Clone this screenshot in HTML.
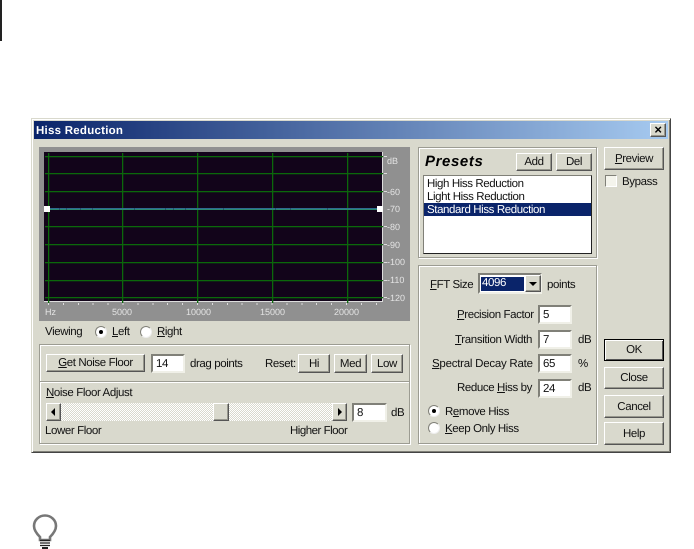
<!DOCTYPE html>
<html><head><meta charset="utf-8"><style>
html,body{margin:0;padding:0;background:#fff}
#r{position:relative;width:694px;height:549px;overflow:hidden;background:#fff;font:11.5px/13px "Liberation Sans",sans-serif;letter-spacing:-.4px;color:#111;text-rendering:geometricPrecision;filter:blur(.3px)}
#r div,#r span.t{position:absolute;box-sizing:border-box}
.t{white-space:nowrap;margin-top:1px}
.btn{background:#d9d9cd;border:1px solid;border-color:#fff #555 #555 #fff;box-shadow:inset -1px -1px 0 #98988e;text-align:center;padding-top:1px}
.in{background:#fff;border:2px solid;border-color:#808078 #f0f0e8 #f0f0e8 #808078;padding-left:3px;padding-top:1px}
.grp{border:1px solid #9c9c92;box-shadow:inset 1px 1px 0 #fff,1px 1px 0 #fff}
.h{background:#0b680b;height:1px;left:45px;width:338px;box-shadow:0 1px 0 rgba(10,100,10,.3)}
.v{background:#0b680b;width:1px;top:153px;height:150px;box-shadow:1px 0 0 rgba(10,100,10,.3)}
.k{background:#ddd;left:384px;width:3px;height:1px}
.n{background:#24506f;left:0;top:208px;width:1px;height:2px}
#r span.lab{color:#e4e4e4;font-size:9px;line-height:12px;letter-spacing:0}
.rad{width:12px;height:12px;border-radius:50%;background:#fff;border:1px solid;border-color:#808078 #eee #eee #808078}
.dot{width:4px;height:4px;border-radius:50%;background:#000;left:3px;top:3px}
</style></head><body><div id="r">
<div style="left:0;top:0;width:2px;height:41px;background:#222"></div>

<div style="left:31px;top:118px;width:640px;height:335px;background:#d9d9cd;border:1px solid;border-color:#d9d9cd #444 #444 #d9d9cd;box-shadow:inset 1px 1px 0 #fff,inset -1px -1px 0 #808078"></div>
<div style="left:34px;top:121px;width:634px;height:18px;background:linear-gradient(90deg,#0a246a,#a6caf0)"></div>
<span class="t" style="left:36px;top:123px;color:#fff;font-weight:bold;line-height:14px;letter-spacing:.25px">Hiss Reduction</span>
<div class="btn" style="left:650px;top:123px;width:16px;height:14px;font:bold 13px/12px 'Liberation Sans',sans-serif;color:#000;padding:0">×</div>

<!-- graph -->
<div style="left:39px;top:147px;width:371px;height:174px;background:#909090"></div>
<div style="left:44px;top:152px;width:339px;height:150px;background:#12041a;border-right:1px solid #ddd;border-bottom:1px solid #ddd"></div>
<div class="h" style="top:156px"></div><div class="h" style="top:173px"></div><div class="h" style="top:191px"></div>
<div class="h" style="top:226px"></div><div class="h" style="top:244px"></div><div class="h" style="top:262px"></div>
<div class="h" style="top:280px"></div><div class="h" style="top:297px"></div>
<div class="v" style="left:48px"></div><div class="v" style="left:122px"></div><div class="v" style="left:197px"></div><div class="v" style="left:272px"></div><div class="v" style="left:347px"></div>
<div style="left:48px;top:209px;width:332px;height:1px;background:#2a8a70"></div>
<div style="left:48px;top:208px;width:332px;height:1px;background:#2f6a90"></div>
<div class="n" style="left:59px"></div><div class="n" style="left:66px"></div><div class="n" style="left:80px"></div><div class="n" style="left:92px"></div><div class="n" style="left:134px"></div><div class="n" style="left:165px"></div><div class="n" style="left:173px"></div><div class="n" style="left:185px"></div><div class="n" style="left:223px"></div><div class="n" style="left:275px"></div><div class="n" style="left:290px"></div><div class="n" style="left:327px"></div>
<div style="left:44px;top:206px;width:6px;height:6px;background:#fff"></div>
<div style="left:377px;top:206px;width:6px;height:6px;background:#fff"></div>
<div class="k" style="top:156px"></div><div class="k" style="top:173px"></div><div class="k" style="top:191px"></div><div class="k" style="top:226px"></div><div class="k" style="top:244px"></div><div class="k" style="top:262px"></div><div class="k" style="top:280px"></div><div class="k" style="top:297px"></div>
<div style="left:48px;top:303px;width:335px;height:2px;background:repeating-linear-gradient(90deg,#ddd 0 1px,transparent 1px 14.900px)"></div>
<span class="t lab" style="left:387px;top:154px">dB</span>
<span class="t lab" style="left:387px;top:185px">-60</span>
<span class="t lab" style="left:387px;top:202px">-70</span>
<span class="t lab" style="left:387px;top:220px">-80</span>
<span class="t lab" style="left:387px;top:238px">-90</span>
<span class="t lab" style="left:387px;top:255px">-100</span>
<span class="t lab" style="left:387px;top:273px">-110</span>
<span class="t lab" style="left:387px;top:291px">-120</span>
<span class="t lab" style="left:45px;top:305px">Hz</span>
<span class="t lab" style="left:112px;top:305px">5000</span>
<span class="t lab" style="left:186px;top:305px">10000</span>
<span class="t lab" style="left:260px;top:305px">15000</span>
<span class="t lab" style="left:334px;top:305px">20000</span>

<!-- viewing -->
<span class="t" style="left:45px;top:325px">Viewing</span>
<div class="rad" style="left:95px;top:326px"><div class="dot"></div></div>
<span class="t" style="left:112px;top:325px"><u>L</u>eft</span>
<div class="rad" style="left:140px;top:326px"></div>
<span class="t" style="left:157px;top:325px"><u>R</u>ight</span>

<!-- left groups -->
<div class="grp" style="left:39px;top:344px;width:371px;height:38px"></div>
<div class="grp" style="left:39px;top:381px;width:371px;height:63px"></div>
<div class="btn" style="left:46px;top:354px;width:99px;height:18px;line-height:15px"><u>G</u>et Noise Floor</div>
<div class="in" style="left:151px;top:354px;width:34px;height:19px;line-height:14px">14</div>
<span class="t" style="left:190px;top:357px">drag points</span>
<span class="t" style="left:265px;top:357px">Reset:</span>
<div class="btn" style="left:298px;top:354px;width:32px;height:19px;line-height:16px">Hi</div>
<div class="btn" style="left:334px;top:354px;width:33px;height:19px;line-height:16px">Med</div>
<div class="btn" style="left:371px;top:354px;width:32px;height:19px;line-height:16px">Low</div>
<span class="t" style="left:46px;top:386px"><u>N</u>oise Floor Adjust</span>
<div style="left:46px;top:403px;width:301px;height:18px;background:repeating-conic-gradient(#fff 0 25%,#d9d9cd 0 50%) 0 0/2px 2px"></div>
<div class="btn" style="left:46px;top:403px;width:15px;height:18px"><div style="left:4px;top:4px;border:4px solid transparent;border-right-color:#000;border-left:0"></div></div>
<div class="btn" style="left:213px;top:403px;width:16px;height:18px"></div>
<div class="btn" style="left:332px;top:403px;width:15px;height:18px"><div style="left:5px;top:4px;border:4px solid transparent;border-left-color:#000;border-right:0"></div></div>
<div class="in" style="left:352px;top:403px;width:35px;height:19px;line-height:14px">8</div>
<span class="t" style="left:391px;top:406px">dB</span>
<span class="t" style="left:45px;top:424px">Lower Floor</span>
<span class="t" style="left:290px;top:424px;letter-spacing:-.5px">Higher Floor</span>

<!-- presets -->
<div class="grp" style="left:418px;top:147px;width:179px;height:111px"></div>
<span class="t" style="left:425px;top:152px;font:italic bold 15px/17px 'Liberation Sans',sans-serif;color:#000;letter-spacing:.6px">Presets</span>
<div class="btn" style="left:516px;top:153px;width:36px;height:18px;line-height:15px">Add</div>
<div class="btn" style="left:556px;top:153px;width:36px;height:18px;line-height:15px">Del</div>
<div style="left:423px;top:175px;width:169px;height:79px;background:#fff;border:1px solid;border-color:#808078 #222 #222 #808078"></div>
<span class="t" style="left:427px;top:177px">High Hiss Reduction</span>
<span class="t" style="left:427px;top:190px">Light Hiss Reduction</span>
<div style="left:424px;top:203px;width:167px;height:13px;background:#0a246a"></div>
<span class="t" style="left:427px;top:203px;color:#fff">Standard Hiss Reduction</span>

<!-- fft -->
<div class="grp" style="left:418px;top:265px;width:179px;height:179px"></div>
<span class="t" style="left:430px;top:278px"><u>F</u>FT Size</span>
<div class="in" style="left:478px;top:273px;width:64px;height:21px;padding:0"></div>
<div style="left:481px;top:277px;width:43px;height:14px;background:#0a246a;color:#fff;padding-left:1px">4096</div>
<div class="btn" style="left:525px;top:275px;width:16px;height:17px"><div style="left:3px;top:6px;border:4px solid transparent;border-top-color:#000;border-bottom:0"></div></div>
<span class="t" style="left:547px;top:278px">points</span>
<span class="t" style="left:457px;top:308px"><u>P</u>recision Factor</span>
<div class="in" style="left:538px;top:305px;width:34px;height:19px;line-height:14px">5</div>
<span class="t" style="left:455px;top:333px;letter-spacing:-.35px"><u>T</u>ransition Width</span>
<div class="in" style="left:538px;top:330px;width:34px;height:19px;line-height:14px">7</div>
<span class="t" style="left:578px;top:333px">dB</span>
<span class="t" style="left:432px;top:357px;letter-spacing:-.25px"><u>S</u>pectral Decay Rate</span>
<div class="in" style="left:538px;top:354px;width:34px;height:19px;line-height:14px">65</div>
<span class="t" style="left:578px;top:357px">%</span>
<span class="t" style="left:457px;top:381px">Reduce <u>H</u>iss by</span>
<div class="in" style="left:538px;top:379px;width:34px;height:19px;line-height:14px">24</div>
<span class="t" style="left:578px;top:381px">dB</span>
<div class="rad" style="left:428px;top:405px"><div class="dot"></div></div>
<span class="t" style="left:445px;top:405px">R<u>e</u>move Hiss</span>
<div class="rad" style="left:428px;top:422px"></div>
<span class="t" style="left:445px;top:422px"><u>K</u>eep Only Hiss</span>

<!-- right buttons -->
<div class="btn" style="left:604px;top:147px;width:60px;height:23px;line-height:20px"><u>P</u>review</div>
<div style="left:605px;top:175px;width:12px;height:12px;background:#f4f4ec;border:1px solid;border-color:#808078 #fff #fff #808078"></div>
<span class="t" style="left:622px;top:175px">Bypass</span>
<div class="btn" style="left:604px;top:339px;width:60px;height:22px;line-height:19px;border:1px solid #000;box-shadow:inset 1px 1px 0 #fff,inset -1px -1px 0 #555">OK</div>
<div class="btn" style="left:604px;top:367px;width:60px;height:22px;line-height:19px">Close</div>
<div class="btn" style="left:604px;top:395px;width:60px;height:23px;line-height:20px">Cancel</div>
<div class="btn" style="left:604px;top:422px;width:60px;height:23px;line-height:20px">Help</div>

<!-- bulb -->
<svg style="position:absolute;left:30px;top:512px" width="30" height="37" viewBox="0 0 30 37">
<path d="M10 25C6 21 4 17.500 4 14A11 10.500 0 0 1 26 14C26 17.500 24 21 20 25V28H10Z" fill="#fff" stroke="#777" stroke-width="2.600"/>
<path d="M10 28.500H20M10 31H20M10 33.500H20" stroke="#222" stroke-width="1.200"/>
<path d="M12 35H18V37H12Z" fill="#222"/>
</svg>
</div></body></html>
